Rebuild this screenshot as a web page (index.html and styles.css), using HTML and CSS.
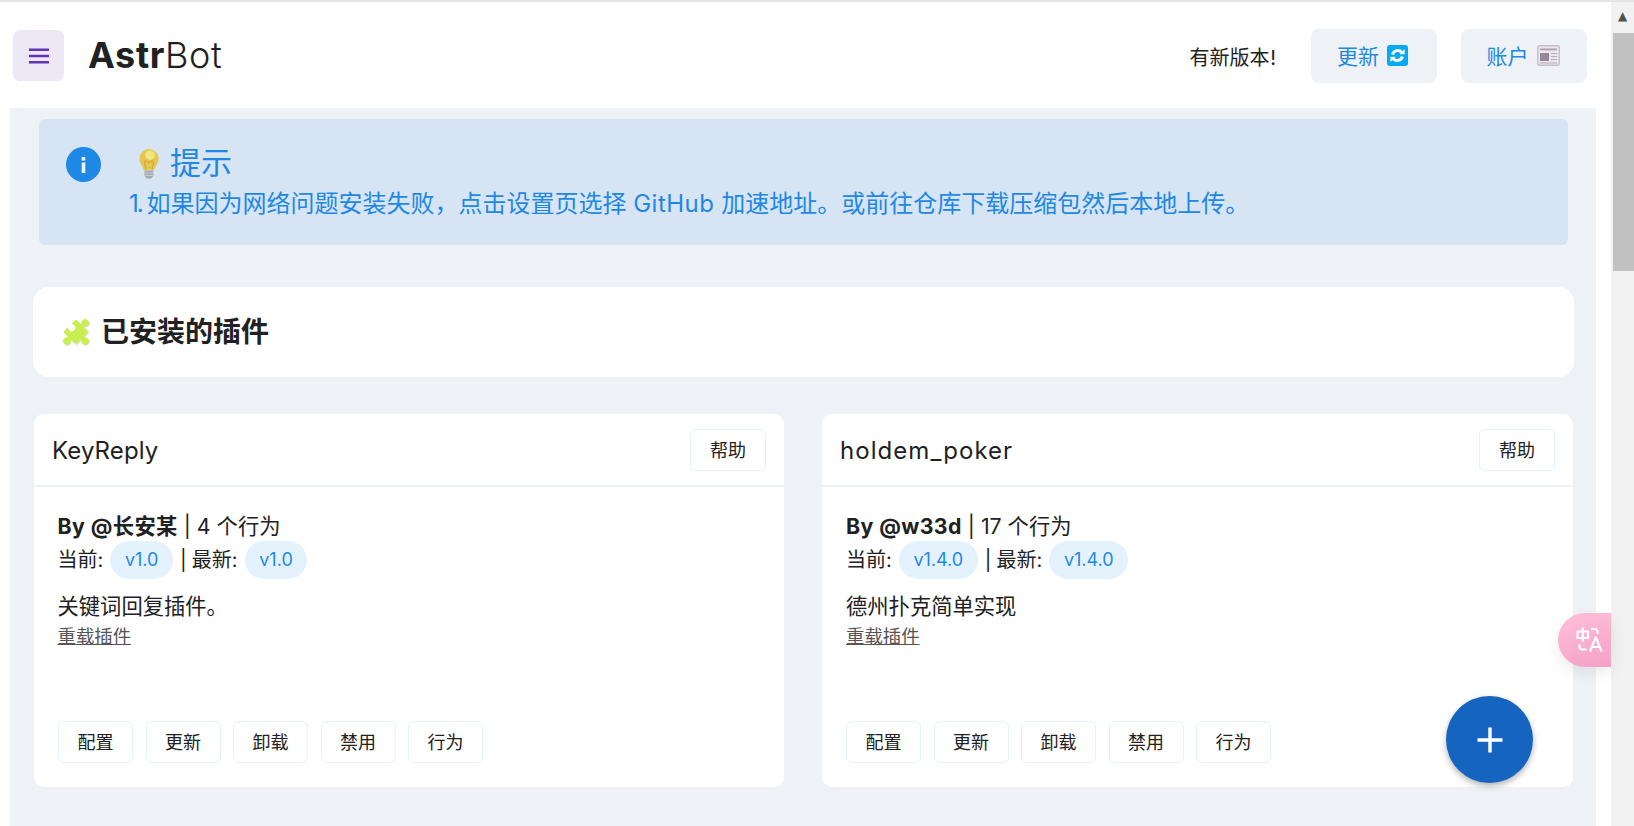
FILE: index.html
```html
<!DOCTYPE html>
<html lang="zh">
<head>
<meta charset="utf-8">
<title>AstrBot</title>
<link rel="stylesheet" href="styles.css">
</head>
<body>
<div class="app">
  <div class="page">
    <header class="topbar">
      <button class="menu-btn" aria-label="menu">
        <svg width="22" height="16" viewBox="0 0 22 16"><path d="M1 1.800h20M1 8h20M1 14.200h20" stroke="#5e35b1" stroke-width="2.500" fill="none"/></svg>
      </button>
      <div class="logo"><b>Astr</b><span>Bot</span></div>
      <div class="spacer"></div>
      <span class="notice">有新版本 !</span>
      <button class="top-btn btn-update">更新
        <svg class="top-icon" width="22" height="22" viewBox="0 0 22 22"><rect width="21" height="21" rx="3" fill="#03a9f4"/><path d="M5.500 9.500A5.500 5.500 0 0 1 14.800 7.200" fill="none" stroke="#fff" stroke-width="3"/><path d="M12.400 9.200h5.200V4z" fill="#fff"/><path d="M15.500 11.500A5.500 5.500 0 0 1 6.200 13.800" fill="none" stroke="#fff" stroke-width="3"/><path d="M8.600 11.800H3.400V17z" fill="#fff"/></svg>
      </button>
      <button class="top-btn btn-account">账户
        <svg class="top-icon" width="23" height="21" viewBox="0 0 23 21"><rect x=".7" y=".7" width="21.600" height="19.600" rx="2" fill="#ece7ec" stroke="#c8bcc8" stroke-width="1.400"/><path d="M3 3.500h17v1.800H3z" fill="#a99fae"/><rect x="3" y="8" width="9" height="8" fill="#94889a"/><path d="M14 8.500h6M14 11.500h6M14 14.500h6M3 18h17" stroke="#b4a9b6" stroke-width="1.200"/></svg>
      </button>
    </header>
    <main class="content">
      <section class="alert">
        <svg class="alert-icon" width="35" height="35" viewBox="0 0 35 35"><circle cx="17.500" cy="17.500" r="17.500" fill="#1e88e5"/><rect x="15.700" y="15.500" width="3.600" height="10.500" fill="#fff" opacity=".92"/><rect x="15.700" y="10" width="3.600" height="3.600" fill="#fff" opacity=".92"/></svg>
        <div class="alert-body">
          <div class="alert-title">
            <svg class="bulb" width="20" height="30" viewBox="0 0 20 30"><path d="M10 0a9.600 9.600 0 0 0-9.600 9.800c0 4.700 3.300 7.200 4.400 11.200h10.400c1.100-4 4.400-6.500 4.400-11.200A9.600 9.600 0 0 0 10 0z" fill="#e5c94f"/><circle cx="11" cy="6.200" r="4.800" fill="#efe581"/><path d="M6.800 20.500c0-4-1.800-5-1-8 .8-2 2.400 1 4.200 1s3.400-3 4.200-1c.8 3-1 4-1 8" fill="none" stroke="#dfa43a" stroke-width="1.300"/><path d="M5.500 21.500h9v5l-2 3h-5l-2-3z" fill="#a3a8ad"/><path d="M5.500 24h9M6 26.500h8" stroke="#d4d8da" stroke-width=".8"/></svg>
            <span>提示</span>
          </div>
          <p class="alert-text"><span class="num">1. </span>如果因为网络问题安装失败，点击设置页选择 <span class="latin">GitHub</span> 加速地址。或前往仓库下载压缩包然后本地上传。</p>
        </div>
      </section>

      <section class="section-head">
        <svg class="puzzle" width="30" height="30" viewBox="0 0 30 30">
          <g transform="translate(.8 .8) rotate(45 15 15)" fill="#dedede"><rect x="6" y="6" width="18" height="18" rx="1"/><circle cx="15" cy="2" r="3.700"/><rect x="13" y="2" width="4" height="5"/><circle cx="28" cy="15" r="3.700"/><rect x="23" y="13" width="5" height="4"/><circle cx="15" cy="28" r="3.700"/><rect x="13" y="23" width="4" height="5"/></g>
          <g transform="rotate(45 15 15)" fill="#c9ee52"><rect x="6" y="6" width="18" height="18" rx="1"/><circle cx="15" cy="2" r="3.700"/><rect x="13" y="2" width="4" height="5"/><circle cx="28" cy="15" r="3.700"/><rect x="23" y="13" width="5" height="4"/><circle cx="15" cy="28" r="3.700"/><rect x="13" y="23" width="4" height="5"/><circle cx="9" cy="15" r="3.500" fill="#fff"/><rect x="5" y="13.200" width="4" height="3.600" fill="#fff"/></g>
        </svg>
        <h1>已安装的插件</h1>
      </section>

      <div class="cards">
        <article class="card">
          <div class="card-head">
            <h2>KeyReply</h2>
            <button class="btn">帮助</button>
          </div>
          <div class="card-body">
            <div class="meta"><b>By @长安某</b> | 4 个行为</div>
            <div class="versions">当前: <span class="pill">v1.0</span> | 最新: <span class="pill">v1.0</span></div>
            <p class="desc">关键词回复插件。</p>
            <a class="reload">重载插件</a>
          </div>
          <div class="card-actions">
            <button class="btn">配置</button><button class="btn">更新</button><button class="btn">卸载</button><button class="btn">禁用</button><button class="btn">行为</button>
          </div>
        </article>
        <article class="card">
          <div class="card-head">
            <h2 class="wide">holdem_poker</h2>
            <button class="btn">帮助</button>
          </div>
          <div class="card-body">
            <div class="meta"><b>By @w33d</b> | 17 个行为</div>
            <div class="versions">当前: <span class="pill">v1.4.0</span> | 最新: <span class="pill">v1.4.0</span></div>
            <p class="desc">德州扑克简单实现</p>
            <a class="reload">重载插件</a>
          </div>
          <div class="card-actions">
            <button class="btn">配置</button><button class="btn">更新</button><button class="btn">卸载</button><button class="btn">禁用</button><button class="btn">行为</button>
          </div>
        </article>
      </div>
    </main>
    <button class="fab" aria-label="add">
      <svg width="26" height="26" viewBox="0 0 26 26"><path d="M13 .5v25M.5 13h25" stroke="#fff" stroke-width="3.400"/></svg>
    </button>
    <div class="translate-tab">
      <svg width="28" height="26" viewBox="0 0 28 26" fill="none" stroke="#fff" stroke-width="2.200"><path d="M1.500 4.500h10.500v6.500h-10.500zM6.800.5v14"/><path d="M15 2h3.500q3 0 3 3v2M10.500 22.500h-4q-3 0-3-3v-2"/><path d="M14 24.500l5.500-14 h.5l5.500 14M16 20h8"/></svg>
    </div>
  </div>
  <div class="scrollbar">
    <div class="scroll-arrow">▲</div>
    <div class="scroll-thumb"></div>
  </div>
</div>
</body>
</html>
```
FILE: styles.css
```css
* { box-sizing: border-box; }
html, body { margin: 0; height: 100%; overflow: hidden; background: #fff; }
body {
  font-family: Inter, "Noto Sans CJK SC", sans-serif;
  color: #212121;
  border-top: 2px solid #e4e4e4;
}
button { font-family: inherit; cursor: pointer; }
.app { display: flex; height: 824px; }
.page { position: relative; flex: 1; min-width: 0; padding-right: 15px; display: flex; flex-direction: column; }

.topbar { height: 106px; flex: none; display: flex; align-items: center; padding: 0 24px 0 13px; margin-right: -15px; }
.menu-btn { width: 51px; height: 51px; margin-top: 1px; background: #ede7f6; border: 0; border-radius: 7px; display: flex; align-items: center; justify-content: center; padding: 0; }
.logo { margin-left: 24px; font-size: 36px; line-height: 44px; margin-top: -1px; color: #212121; letter-spacing: .65px; }
.logo b { font-weight: 700; }
.logo span { font-weight: 300; }
.spacer { flex: 1; }
.notice { font-size: 20px; margin-right: 35px; margin-top: 2px; word-spacing: -5px; }
.top-btn { width: 126px; height: 54px; margin-top: 2px; border: 0; border-radius: 8px; background: #eef2f6; color: #1e88e5; font-size: 21px; display: flex; align-items: center; justify-content: center; padding: 0 2px 3px 0; gap: 8px; }
.btn-account { margin-left: 24px; }
.top-icon { flex: none; margin-top: 2px; }

.content { flex: 1; min-height: 0; margin-left: 10px; background: #eef2f6; padding: 11px 22px 0 23px; }
.alert { height: 126px; margin: 0 6px 0 6px; background: #d6e4f3; border-radius: 6px; display: flex; color: #1e88e5; padding: 28px 0 0 27px; }
.alert-icon { flex: none; }
.alert-body { margin-left: 28px; }
.alert-title { display: flex; align-items: center; margin-left: 10px; height: 30px; margin-top: 2px; }
.alert-title span { font-size: 31px; line-height: 30px; margin-left: 11px; margin-top: -2px; }
.bulb { flex: none; }
.alert-text { margin: 8px 0 0 0; font-size: 24px; line-height: 34px; white-space: nowrap; }
.num { letter-spacing: -2px; }
.latin { letter-spacing: .5px; }

.section-head { height: 90px; margin-top: 42px; background: #fff; border-radius: 16px; display: flex; align-items: center; padding-left: 28px; }
.puzzle { flex: none; }
.section-head h1 { margin: 0 0 0 10px; font-size: 28px; font-weight: 700; line-height: 36px; }

.cards { display: grid; grid-template-columns: 750px 751px; gap: 38px; margin: 37px 0 0 1px; }
.card { height: 373px; background: #fff; border-radius: 10px; display: flex; flex-direction: column; }
.card-head { height: 73px; flex: none; border-bottom: 2px solid #eef2f6; display: flex; align-items: center; justify-content: space-between; padding: 0 18px; }
.card-head h2 { margin: 2px 0 0; font-size: 24px; font-weight: 400; letter-spacing: .1px; }
.card-head h2.wide { letter-spacing: 1.05px; }
.btn { height: 42px; min-width: 76px; padding: 0 0 2px; background: #fff; border: 1px solid #e3f2fd; border-radius: 6px; font-size: 18px; color: #212121; }
.card-body { flex: 1; padding: 23px 23.5px 0; font-size: 21.3px; }
.card + .card .card-body { padding-left: 24px; }
.meta { line-height: 32px; }
.meta b { font-weight: 700; letter-spacing: .4px; }
.versions { font-size: 20px; line-height: 38px; margin-top: -1px; white-space: nowrap; word-spacing: -.5px; }
.pill { display: inline-block; height: 38px; line-height: 38px; padding: 0 14.5px; background: #e3f2fd; color: #1e88e5; border-radius: 20px; font-size: 18px; margin: 0 2px; vertical-align: top; }
.desc { margin: 12px 0 0; font-size: 21.3px; line-height: 30px; }
.reload { display: block; margin-top: 2px; font-size: 18.4px; line-height: 26px; color: #555; text-decoration: underline; }
.card-actions { flex: none; display: flex; gap: 12.5px; padding: 0 24px 24px; }
.card-actions .btn { width: 75px; min-width: 0; }

.fab { position: absolute; left: 1446px; top: 694px; width: 87px; height: 87px; border: 0; border-radius: 50%; background: #1565c0; box-shadow: 0 3px 6px rgba(0,0,0,.3); display: flex; align-items: center; justify-content: center; padding: 0; }
.translate-tab { position: absolute; left: 1558px; top: 611px; width: 53px; height: 54px; border-radius: 27px 0 0 27px; background: linear-gradient(160deg, rgba(255,190,215,.95), rgba(244,155,195,.95)); box-shadow: 0 6px 14px rgba(0,0,0,.08); display: flex; align-items: center; padding-left: 18px; }

.scrollbar { width: 23px; flex: none; background: #f1f1f1; padding-left: 2px; }
.scroll-arrow { height: 31px; background: #f1f1f1; color: #505050; font-family: "DejaVu Sans", sans-serif; font-size: 12px; line-height: 28px; text-align: center; padding-right: 2px; }
.scroll-thumb { height: 238px; background: #c1c1c1; }
```
